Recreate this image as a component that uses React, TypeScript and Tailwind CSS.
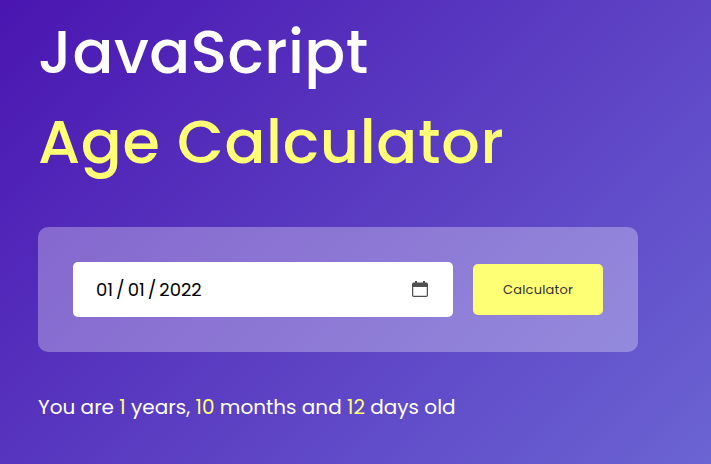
import React from "react";

function CalendarIcon() {
  return (
    <svg className="relative -top-px" width="16" height="16" viewBox="0 0 16 16" fill="none" aria-hidden="true">
      <path
        fill="#505050"
        fillRule="evenodd"
        d="M3 0h2v1.500h6V0h2v1.500h1.300A1.700 1.700 0 0 1 16 3.200v11.100a1.700 1.700 0 0 1-1.700 1.700H1.700A1.700 1.700 0 0 1 0 14.300V3.200A1.700 1.700 0 0 1 1.700 1.500H3zM1.250 6v8.300q0 .5.500.5h12.500q.5 0 .5-.5V6z"
      />
    </svg>
  );
}

function Num({ children }: { children: React.ReactNode }) {
  return <span className="text-[#ffff76]">{children}</span>;
}

export default function App() {
  return (
    <main className="h-[464px] w-[711px] overflow-hidden bg-[linear-gradient(135deg,#4a15b1,#6b64d3)] px-[38px] font-[Poppins,Inter,sans-serif] text-white">
      <h1 className="pt-[7px] text-[60.500px] leading-[90px] font-medium whitespace-nowrap">
        <span className="block tracking-[0.4px]">JavaScript</span>
        <span className="block tracking-[0.680px] text-[#ffff76]">Age Calculator</span>
      </h1>
      <section className="mt-10 flex h-[125px] w-[600px] items-center gap-5 rounded-[10px] bg-white/30 px-[35px]">
        <div className="flex h-[55px] w-[380px] items-center justify-between rounded-[5px] bg-white pr-[25px] pl-[23px] text-[18px] text-black">
          <span className="flex">
            <span>01</span>
            <span className="mx-[3px]">/</span>
            <span>01</span>
            <span className="mx-[3px]">/</span>
            <span>2022</span>
          </span>
          <CalendarIcon />
        </div>
        <button className="h-[51px] w-[130px] rounded-[5px] bg-[#ffff76] text-[13px] tracking-[0.2px] text-[#333]">
          Calculator
        </button>
      </section>
      <p className="mt-10 text-[20px] leading-[30px] whitespace-nowrap">
        You are <Num>1</Num> years, <Num>10</Num> months and <Num>12</Num> days old
      </p>
    </main>
  );
}
